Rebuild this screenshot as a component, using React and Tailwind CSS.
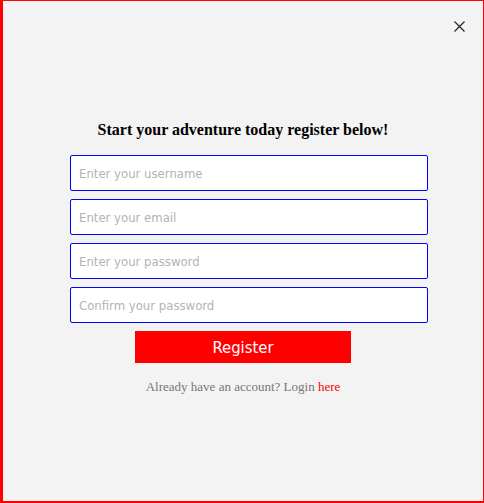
import React from 'react'

const fields = [
  { type: 'text', placeholder: 'Enter your username' },
  { type: 'email', placeholder: 'Enter your email' },
  { type: 'password', placeholder: 'Enter your password' },
  { type: 'password', placeholder: 'Confirm your password' },
]

const sans = { fontFamily: '"DejaVu Sans Condensed", "Noto Sans", Tahoma, sans-serif' }

export default function App() {
  return (
    <div className="relative h-[503px] w-[484px] bg-[#f3f3f3] border-[#ff0000] border-l-[3px] border-t border-r border-b-[2px]">
      <button className="absolute right-[14px] top-[15px] w-5 h-5 flex items-center justify-center">
        <svg width="11" height="11" viewBox="0 0 11 11" fill="none" stroke="#222" strokeWidth="1.2">
          <path d="M0.5 0.5 L10.5 10.5 M10.5 0.5 L0.5 10.5" />
        </svg>
      </button>

      <div className="flex flex-col items-center pt-[120px]">
        <h2 className="text-[16px] leading-[18px] font-bold text-black" style={{ fontFamily: '"Liberation Serif", serif' }}>
          Start your adventure today register below!
        </h2>

        <form className="mt-[16px] w-[346px] flex flex-col gap-[8px]" onSubmit={(e) => e.preventDefault()}>
          {fields.map((f) => (
            <input
              key={f.placeholder}
              type={f.type}
              placeholder={f.placeholder}
              className="block w-[358px] h-[36px] bg-white border border-[#0000ff] rounded-[2px] pl-[8px] pr-2 text-[13px] text-black placeholder:text-[#b3b3b3] outline-none"
              style={sans}
            />
          ))}
        </form>

        <button className="mt-[8px] w-[216px] h-[32px] pt-[3px] bg-[#ff0000] text-white text-[16.5px]" style={sans}>
          Register
        </button>

        <p className="mt-[16px] text-[13px] leading-[16px] text-[#777]" style={{ fontFamily: '"Liberation Serif", serif' }}>
          Already have an account? Login <a href="#" className="text-[#ff0000]">here</a>
        </p>
      </div>
    </div>
  )
}
